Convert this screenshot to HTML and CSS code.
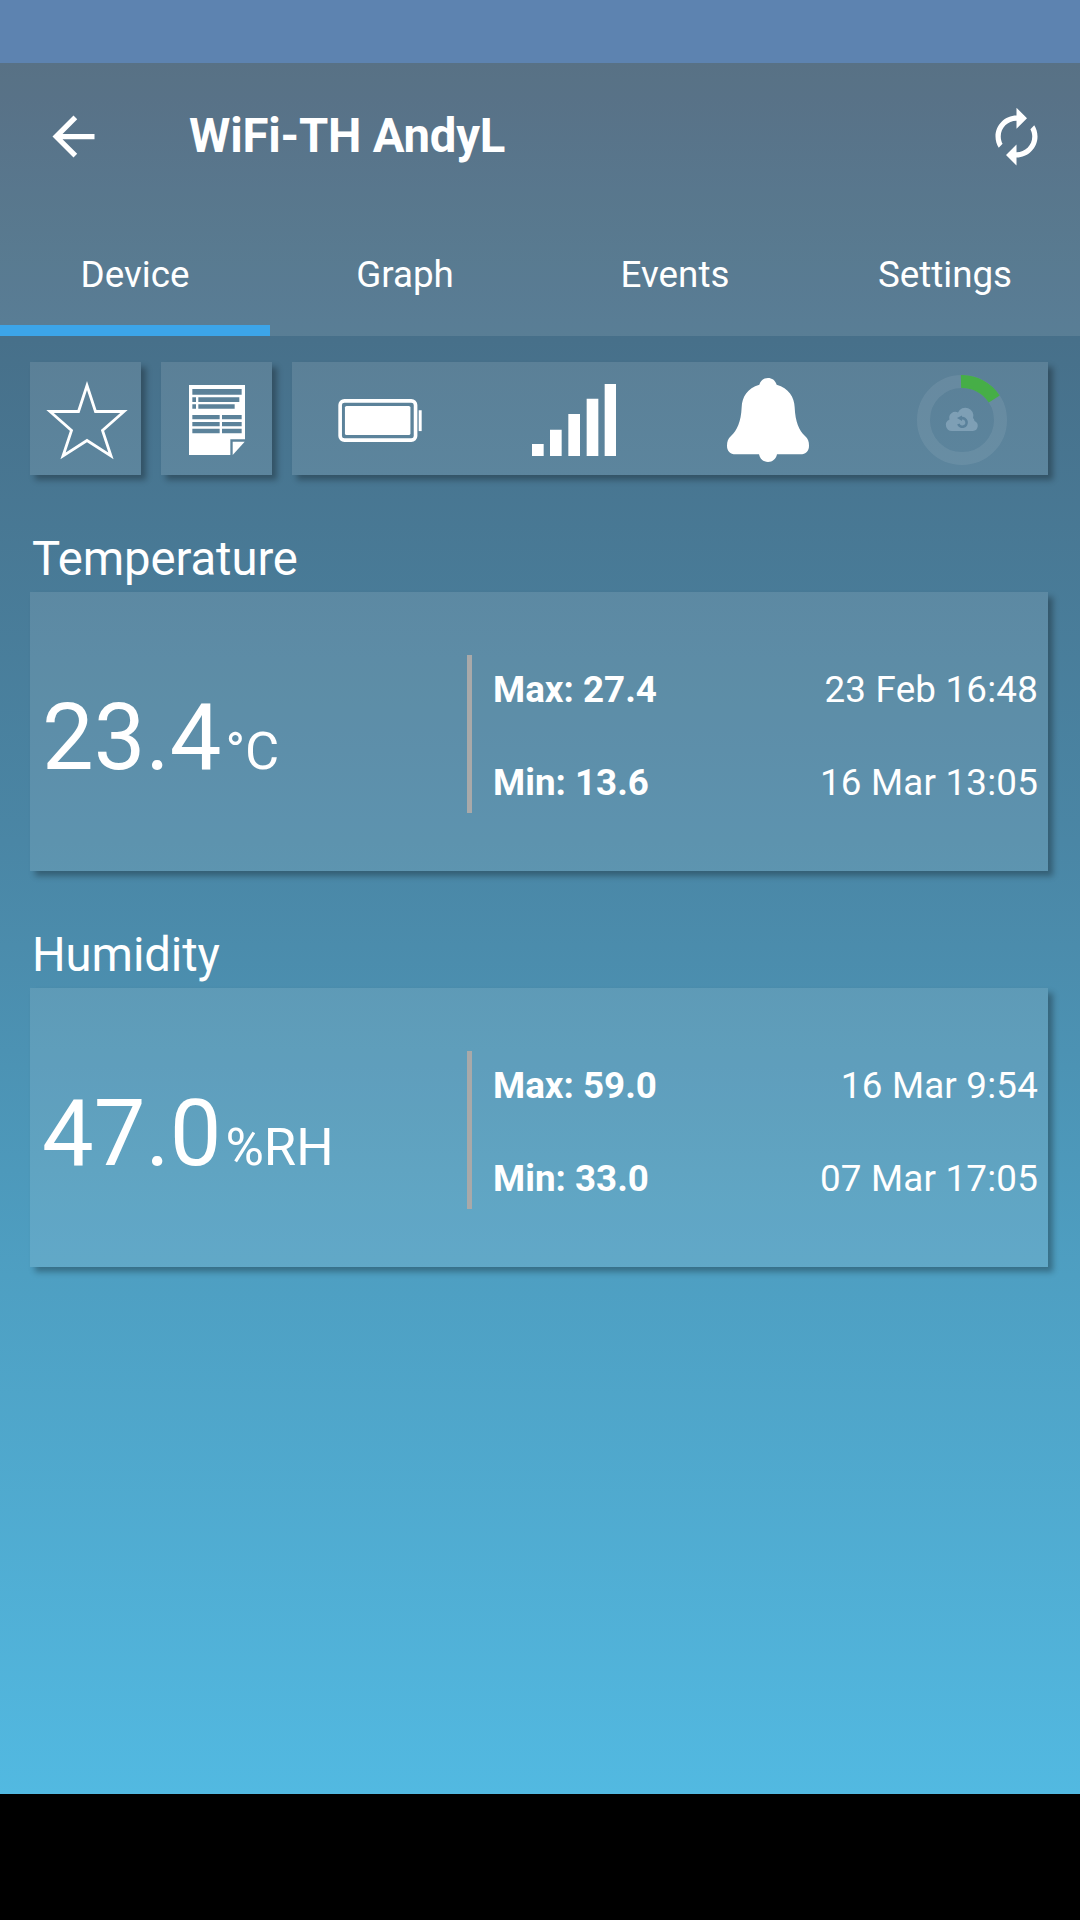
FILE: index.html
```html
<!DOCTYPE html>
<html lang="en">
<head>
    <meta charset="UTF-8">
    <meta name="viewport" content="width=device-width, initial-scale=1.0">
    <title>WiFi-TH AndyL</title>
    <link rel="stylesheet" href="styles.css">
</head>
<body>
    <div class="status-bar"></div>

    <div class="screen">
        <header>
            <div class="toolbar">
                <svg class="icon" viewBox="0 0 24 24"><path d="M20 11H7.83l5.59-5.59L12 4l-8 8 8 8 1.41-1.41L7.83 13H20v-2z"/></svg>
                <h1>WiFi-TH AndyL</h1>
                <svg class="icon" viewBox="0 0 24 24"><path d="M12 6v3l4-4-4-4v3c-4.42 0-8 3.58-8 8 0 1.57.46 3.03 1.24 4.26L6.7 14.8c-.45-.83-.7-1.79-.7-2.8 0-3.31 2.69-6 6-6zm6.76 1.74L17.3 9.2c.44.84.7 1.79.7 2.8 0 3.31-2.69 6-6 6v-3l-4 4 4 4v-3c4.42 0 8-3.58 8-8 0-1.57-.46-3.03-1.24-4.26z"/></svg>
            </div>
            <nav>
                <a class="active">Device</a>
                <a>Graph</a>
                <a>Events</a>
                <a>Settings</a>
            </nav>
        </header>

        <main>
            <div class="icon-row">
                <div class="card small">
                    <!-- Favourite -->
                    <svg width="84" height="80" viewBox="0 0 84 80">
                        <path d="M42 5.500L50.500 31.500H79L57.500 50.500L66 76L42 60.500L18 76L26.500 50.500L5 31.500H33.500Z" fill="none" stroke="#fff" stroke-width="2.8"/>
                    </svg>
                </div>
                <div class="card small notes">
                    <!-- Notes -->
                    <svg width="56" height="70" viewBox="0 0 168 210">
                        <path fill="#fff" fill-rule="evenodd" d="M0 0H168V163H124V210H0ZM10 12V29H158V12ZM10 37V51H21V37ZM28 37V51H151V37ZM10 58V71H21V58ZM28 58V71H137V58ZM10 90V103H92V90ZM99 90V103H158V90ZM10 111V124H92V111ZM99 111V124H158V111ZM10 131V145H92V131ZM99 131V145H158V131Z"/>
                        <path fill="#fff" d="M131 170H167L131 210Z"/>
                    </svg>
                </div>
                <div class="card wide">
                    <!-- Battery -->
                    <svg width="84" height="43" viewBox="0 0 252 130">
                        <rect x="5.500" y="5.500" width="228" height="119" rx="13" fill="none" stroke="#fff" stroke-width="11"/>
                        <rect x="20" y="21" width="198" height="88" rx="5" fill="#fff"/>
                        <rect x="243" y="34" width="9" height="63" fill="#fff"/>
                    </svg>
                    <!-- Signal -->
                    <svg width="84" height="72" viewBox="0 0 252 216">
                        <path fill="#fff" d="M0 180H35V216H0ZM54 137H89V216H54ZM109 90H144V216H109ZM164 44H199V216H164ZM218 0H252V216H218Z"/>
                    </svg>
                    <!-- Alarm -->
                    <svg class="bell" width="82" height="84" viewBox="0 0 246 252">
                        <path fill="#fff" d="M97 20C102 6 111 0 123 0C135 0 144 6 149 20C185 30 202 57 203 88C205 132 216 158 234 174C243 181 246 191 246 203C246 219 237 229 220 229H150C147 243 137 252 123 252C109 252 99 243 96 229H26C9 229 0 219 0 203C0 191 3 181 12 174C30 158 42 132 44 88C45 57 61 30 97 20Z"/>
                    </svg>
                    <!-- Cloud sync countdown -->
                    <svg width="90" height="90" viewBox="0 0 90 90">
                        <circle class="ring" cx="45" cy="45" r="38.5"/>
                        <path class="ring-value" d="M44 6.500A38.5 38.5 0 0 1 77.300 24"/>
                        <path class="cloud" d="M35 56A6 6 0 0 1 32.500 44.500A6 6 0 0 1 41 37.500A8 8 0 0 1 56 43A5 5 0 0 1 57.500 46A5.200 5.200 0 0 1 56 56Z"/>
                        <path class="cloud-arrow" d="M44.500 43.200A4.300 4.300 0 1 1 41.300 49"/>
                        <path class="cloud-tip" d="M40 43L45 40.500V46Z"/>
                    </svg>
                </div>
            </div>

            <section>
                <h2>Temperature</h2>
                <div class="card reading">
                    <div class="value">23.4<span class="unit">°C</span></div>
                    <div class="divider"></div>
                    <div class="stats">
                        <p><b>Max: 27.4</b><span>23 Feb 16:48</span></p>
                        <p><b>Min: 13.6</b><span>16 Mar 13:05</span></p>
                    </div>
                </div>
            </section>

            <section>
                <h2>Humidity</h2>
                <div class="card reading">
                    <div class="value">47.0<span class="unit">%RH</span></div>
                    <div class="divider"></div>
                    <div class="stats">
                        <p><b>Max: 59.0</b><span>16 Mar 9:54</span></p>
                        <p><b>Min: 33.0</b><span>07 Mar 17:05</span></p>
                    </div>
                </div>
            </section>
        </main>
    </div>
</body>
</html>
```

FILE: styles.css
```css
/* General Page Styling */
* {
    box-sizing: border-box;
}

body {
    margin: 0;
    height: 1920px;
    background: #000;
    color: #fff;
    font-family: Roboto, sans-serif;
    font-size: 36.75px;
}

svg {
    display: block;
    flex: none;
}

.status-bar {
    height: 63px;
    background: #5d83b0;
}

.screen {
    height: 1731px;
    background: linear-gradient(#466178, #47708a 16%, #4a86a5 45%, #4e9fc2 70%, #52b9e1);
}

/* Header */
header {
    height: 273px;
    background: rgba(255, 255, 255, 0.1);
}

.toolbar {
    display: flex;
    align-items: center;
    height: 147px;
    padding: 0 32px 1px 42px;
}

.icon {
    width: 63px;
    height: 63px;
    fill: #fff;
}

h1 {
    flex: 1;
    margin: 0 0 0 84px;
    font-size: 47.25px;
    font-weight: bold;
    line-height: 56px;
    letter-spacing: -0.2px;
}

nav {
    display: flex;
    height: 126px;
}

nav a {
    flex: 1;
    padding-top: 43px;
    line-height: 43px;
    text-align: center;
    border-bottom: 11px solid transparent;
}

nav a.active {
    border-color: #3ca5e9;
}

/* Cards */
main {
    padding: 26px 32px 0 30px;
}

.card {
    background: rgba(255, 255, 255, 0.11);
    box-shadow: 5px 5px 6px rgba(0, 0, 0, 0.3);
}

.icon-row {
    display: flex;
    gap: 20px;
}

.icon-row .card {
    display: flex;
    align-items: center;
    height: 113px;
    padding-top: 3px;
}

.icon-row .small {
    justify-content: center;
    width: 111px;
    padding-left: 2px;
}

.icon-row .notes {
    padding-left: 1px;
}

.icon-row .wide {
    flex: 1;
    justify-content: space-between;
    padding-left: 46px;
    padding-right: 41px;
}

.bell {
    margin: 0 -2px 0 2px;
}

.ring {
    fill: none;
    stroke: rgba(255, 255, 255, 0.08);
    stroke-width: 13;
}

.ring-value {
    fill: none;
    stroke: #46ae47;
    stroke-width: 13;
}

.cloud {
    fill: #7e9fb5;
}

.cloud-arrow {
    fill: none;
    stroke: #5a819b;
    stroke-width: 2.6;
}

.cloud-tip {
    fill: #5a819b;
}

/* Readings */
h2 {
    margin: 56px 0 5px 2px;
    font-size: 47.25px;
    font-weight: normal;
    line-height: 56px;
    letter-spacing: -0.1px;
}

.reading {
    display: flex;
    align-items: center;
    height: 279px;
    padding: 5px 10px 0 12px;
}

.value {
    width: 425px;
    padding-top: 21px;
    font-size: 92px;
    line-height: 108px;
}

.unit {
    margin-left: 4px;
    font-size: 52.5px;
}

.divider {
    width: 5px;
    height: 158px;
    background: #a9a9a9;
}

.stats {
    flex: 1;
    padding: 4px 0 0 21px;
}

.stats p {
    display: flex;
    justify-content: space-between;
    margin: 0;
    line-height: 43px;
}

.stats p span {
    letter-spacing: 0.2px;
}

.stats p + p {
    margin-top: 50px;
}
```
